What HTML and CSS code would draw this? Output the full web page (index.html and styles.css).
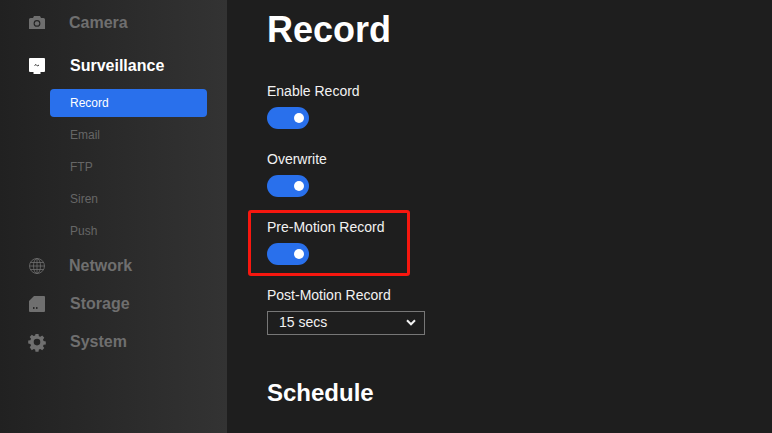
FILE: index.html
```html
<!DOCTYPE html>
<html lang="en">
  <head>
    <link rel="stylesheet" href="styles.css">
    <title>Record</title>
  </head>
  <body>
    <div class="app">
      <div class="sidebar">
        <div class="nav-item">
          <svg class="nav-icon" viewBox="0 0 16 16">
            <path fill-rule="evenodd" d="M0 4.500Q0 3 1.500 3H4l1-2h6l1 2h2.500Q16 3 16 4.500V14H0zM8 5a3.400 3.400 0 1 0 0 6.800A3.400 3.400 0 0 0 8 5z"/>
            <circle cx="8" cy="8.400" r="2.200"/>
          </svg>
          <span>Camera</span>
        </div>
        <div class="nav-item active surveillance nudge">
          <svg class="nav-icon" viewBox="0 0 16 16">
            <path d="M1 0h14q1 0 1 1v12q0 1-1 1H1q-1 0-1-1V1q0-1 1-1z"/>
            <path d="M4.500 14h7v2h-7z"/>
            <path class="trace" d="M5.500 7.500l1.500-1 1.500 1.500 1.500-1"/>
          </svg>
          <span>Surveillance</span>
        </div>
        <div class="sub-nav">
          <div class="sub-item selected">Record</div>
          <div class="sub-item">Email</div>
          <div class="sub-item">FTP</div>
          <div class="sub-item">Siren</div>
          <div class="sub-item">Push</div>
        </div>
        <div class="nav-item">
          <svg class="nav-icon" viewBox="0 0 16 16">
            <g fill="none" stroke="#6f6f6f" stroke-width="0.8">
              <circle cx="8" cy="8" r="7.500"/>
              <ellipse cx="8" cy="8" rx="3.500" ry="7.500"/>
              <path d="M8 .5v15M.5 8h15M1.500 4.500h13M1.500 11.500h13"/>
            </g>
          </svg>
          <span>Network</span>
        </div>
        <div class="nav-item nudge">
          <svg class="nav-icon" viewBox="0 0 16 16">
            <path d="M5 0h10q1 0 1 1v14q0 1-1 1H1q-1 0-1-1V5z"/>
            <path class="cut" d="M4 11h1.500v2H4zM7 11h1.500v2H7z"/>
          </svg>
          <span>Storage</span>
        </div>
        <div class="nav-item nudge">
          <svg class="nav-icon" viewBox="0 0 16 16">
            <path fill-rule="evenodd" d="M6.500 0h3l.4 2.200 1.400.6 1.900-1.300 2.100 2.200-1.300 1.900.6 1.400 2.200.4v3l-2.200.4-.6 1.400 1.300 1.900-2.100 2.200-1.900-1.300-1.400.6-.4 2.200h-3l-.4-2.200-1.400-.6-1.900 1.300L.7 13.300 2 11.400l-.6-1.400L-.8 9.600v-3l2.200-.4.6-1.400L.7 2.900l2.100-2.200 1.900 1.300 1.400-.6zM8 4.800a3.300 3.300 0 1 0 0 6.600 3.300 3.300 0 0 0 0-6.600z"/>
          </svg>
          <span>System</span>
        </div>
      </div>

      <div class="main">
        <h1>Record</h1>
        <div class="field">
          <label>Enable Record</label>
          <div class="toggle"><div class="knob"></div></div>
        </div>
        <div class="field">
          <label>Overwrite</label>
          <div class="toggle"><div class="knob"></div></div>
        </div>
        <div class="field marked">
          <label>Pre-Motion Record</label>
          <div class="toggle"><div class="knob"></div></div>
        </div>
        <div class="field">
          <label>Post-Motion Record</label>
          <div class="select-wrap">
            <select class="select">
              <option>15 secs</option>
            </select>
            <svg class="chevron" viewBox="0 0 10 7">
              <path d="M1 1.300l4 4 4-4"/>
            </svg>
          </div>
        </div>
        <h2>Schedule</h2>
      </div>
    </div>
  </body>
</html>
```

FILE: styles.css
```css
html,
body {
  margin: 0;
  height: 100%;
  overflow: hidden;
}
body {
  font-family: "Liberation Sans", Arial, sans-serif;
  background-color: #1e1e1e;
  color: #fff;
}
.app {
  display: flex;
  height: 433px;
}

/* sidebar */
.sidebar {
  width: 227px;
  flex-shrink: 0;
  padding-top: 4px;
  box-sizing: border-box;
  background: linear-gradient(to right, #212121, #333333);
}
.nav-item {
  display: flex;
  align-items: center;
  height: 38px;
  padding-left: 29px;
  font-size: 16px;
  font-weight: bold;
  color: #6f6f6f;
}
.nav-item span {
  margin-left: 24px;
}
.nav-item.nudge span {
  margin-left: 25px;
}
.nav-icon {
  width: 16px;
  height: 16px;
  fill: #6f6f6f;
  overflow: visible;
}
.surveillance {
  margin-top: 5px;
}
.active {
  color: #fff;
}
.active .nav-icon {
  fill: #fff;
}
.trace {
  fill: none;
  stroke: #333;
  stroke-width: 1;
}
.cut {
  fill: #2a2a2a;
}
.sub-nav {
  display: flex;
  flex-direction: column;
  gap: 4px;
  padding: 4px 20px 0 50px;
  margin-bottom: 2px;
}
.sub-item {
  height: 28px;
  line-height: 28px;
  padding-left: 20px;
  border-radius: 4px;
  font-size: 12px;
  color: #666;
}
.selected {
  background-color: #2970ec;
  color: #fff;
}

/* main panel */
.main {
  flex: 1;
  padding-left: 40px;
}
h1 {
  margin: 9px 0 0;
  font-size: 36px;
  line-height: 41px;
}
h2 {
  margin: 44px 0 0;
  font-size: 24px;
  line-height: 28px;
}
.field {
  position: relative;
  margin-top: 33px;
}
.field + .field {
  margin-top: 22px;
}
.field label {
  display: block;
  height: 16px;
  margin-bottom: 8px;
  font-size: 14px;
  line-height: 16px;
  color: #f2f2f2;
}
.toggle {
  position: relative;
  width: 42px;
  height: 22px;
  border-radius: 11px;
  background-color: #2970ec;
}
.knob {
  position: absolute;
  top: 6px;
  right: 5px;
  width: 10px;
  height: 10px;
  border-radius: 50%;
  background-color: #fff;
}
/* red annotation box drawn over the screenshot */
.marked::after {
  content: "";
  position: absolute;
  left: -19px;
  top: -9px;
  width: 156px;
  height: 60px;
  border: 3px solid #f7170f;
  border-radius: 3px;
}
.select-wrap {
  position: relative;
  width: 158px;
}
.select {
  display: block;
  width: 158px;
  height: 24px;
  padding: 0 0 2px 11px;
  font-family: "Liberation Sans", Arial, sans-serif;
  font-size: 14px;
  color: #f2f2f2;
  background-color: #1e1e1e;
  border: 1px solid #777;
  border-radius: 0;
  appearance: none;
}
.chevron {
  position: absolute;
  top: 8px;
  right: 9px;
  width: 10px;
  height: 7px;
  fill: none;
  stroke: #f2f2f2;
  stroke-width: 2;
}
```
